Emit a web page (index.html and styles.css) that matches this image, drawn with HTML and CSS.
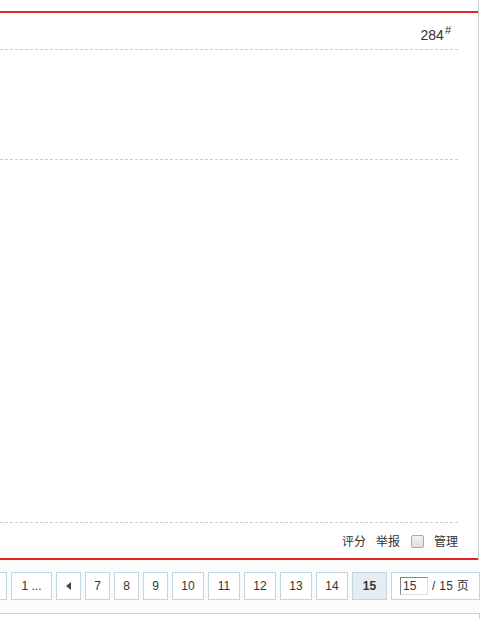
FILE: index.html
```html
<!DOCTYPE html>
<html>
<head>
<meta charset="utf-8">
<link rel="stylesheet" href="styles.css">
</head>
<body>
<div class="post">
  <div class="post-box">
    <div class="pi">
      <span class="floor">284<sup>#</sup></span>
    </div>
    <div class="content-top"></div>
    <div class="content-main"></div>
    <div class="po">
      <a class="act">评分</a>
      <a class="act">举报</a>
      <span class="chk"></span>
      <a class="act">管理</a>
    </div>
  </div>
</div>
<div class="pgs">
  <div class="pg">
    <a class="pgi first"></a>
    <a class="pgi dots">1 ...</a>
    <a class="pgi prev"><span class="tri"></span></a>
    <a class="pgi d1">7</a>
    <a class="pgi d1">8</a>
    <a class="pgi d1">9</a>
    <a class="pgi d2">10</a>
    <a class="pgi d2">11</a>
    <a class="pgi d2">12</a>
    <a class="pgi d2">13</a>
    <a class="pgi d2">14</a>
    <strong class="pgi cur">15</strong>
    <label class="pgi lbl"><span class="px">15</span><span class="tot">/ 15 页</span></label>
  </div>
</div>
<div class="below"></div>
</body>
</html>
```

FILE: styles.css
```css
html, body {
  margin: 0;
  padding: 0;
  background: #fff;
}
body {
  font-family: "Liberation Sans", "Noto Sans CJK SC", sans-serif;
  font-size: 12px;
  color: #333;
  width: 481px;
  overflow: hidden;
}
.post {
  width: 478px;
  border-right: 1px solid #cfcfcf;
  padding-top: 11px;
}
.post-box {
  border-top: 2px solid #e02525;
  border-bottom: 2px solid #e02525;
}
.pi {
  height: 36px;
  margin-right: 20px;
  border-bottom: 1px dashed #cdcdcd;
  display: flex;
  justify-content: flex-end;
  align-items: flex-start;
}
.floor {
  font-size: 14px;
  color: #333;
  margin-top: 14px;
  margin-right: 7px;
  line-height: 16px;
}
.floor sup {
  font-size: 11px;
  position: relative;
  top: -2px;
  margin-left: 1px;
  vertical-align: top;
  line-height: 11px;
}
.content-top {
  height: 109px;
  margin-right: 20px;
  border-bottom: 1px dashed #cdcdcd;
}
.content-main {
  height: 362px;
  margin-right: 20px;
  border-bottom: 1px dashed #cdcdcd;
}
.po {
  height: 35px;
  margin-right: 20px;
  display: flex;
  justify-content: flex-end;
  align-items: center;
  padding-top: 2px;
  box-sizing: border-box;
}
.act {
  color: #333;
  line-height: 16px;
  margin-left: 10px;
}
.chk {
  width: 11px;
  height: 11px;
  border: 1px solid #a9a9a9;
  border-radius: 2px;
  background: linear-gradient(#f4f4f4, #dedede);
  margin-left: 11px;
}
.pgs {
  width: 480px;
  height: 53px;
  background: #fbfbfb;
  border-bottom: 1px solid #cfcfcf;
  overflow: hidden;
}
.pg {
  display: flex;
  justify-content: flex-end;
  padding-top: 12px;
  width: 480px;
}
.pgi {
  flex: none;
  box-sizing: border-box;
  height: 28px;
  line-height: 26px;
  border: 1px solid #c2d5e3;
  background: #fff;
  color: #333;
  padding: 0 8px;
  margin-left: 4px;
  white-space: nowrap;
  font-size: 12px;
  display: flex;
  align-items: center;
  justify-content: center;
}
.first {
  width: 40px;
  padding: 0;
}
.dots {
  width: 41px;
  padding: 0;
}
.d1 {
  width: 25px;
  padding: 0;
}
.d2 {
  width: 32px;
  padding: 0;
}
.prev {
  width: 25px;
  padding: 0;
}
.tri {
  width: 0;
  height: 0;
  border-top: 4px solid transparent;
  border-bottom: 4px solid transparent;
  border-right: 5px solid #444;
}
.cur {
  width: 35px;
  padding: 0;
  background: #e5edf2;
  font-weight: bold;
}
.lbl {
  width: 89px;
  padding: 0 8px;
  justify-content: flex-start;
}
.px {
  box-sizing: border-box;
  width: 28px;
  height: 18px;
  line-height: 16px;
  border: 1px solid;
  border-color: #848484 #e0e0e0 #e0e0e0 #848484;
  padding-left: 2px;
  margin-right: 4px;
  color: #333;
  background: #fff;
}
.tot {
  color: #333;
  letter-spacing: 0.3px;
}
.below {
  width: 479px;
  height: 10px;
  border-right: 1px solid #cfcfcf;
}
```
